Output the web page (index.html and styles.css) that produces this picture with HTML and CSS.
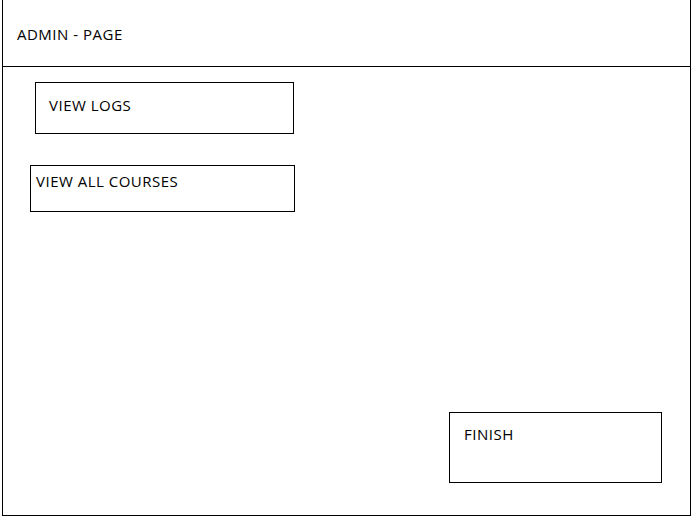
FILE: index.html
```html
<!DOCTYPE html>
<html>
<head>
<meta charset="utf-8">
<link rel="stylesheet" href="styles.css">
</head>
<body>
<div class="frame">
  <div class="header"><span class="title">ADMIN - PAGE</span></div>
  <div class="content">
    <div class="btn btn-logs">VIEW LOGS</div>
    <div class="btn btn-courses">VIEW ALL COURSES</div>
    <div class="btn btn-finish">FINISH</div>
  </div>
</div>
</body>
</html>
```
FILE: styles.css
```css
html, body {
  margin: 0;
  padding: 0;
  background: #fff;
}
body {
  font-family: "Open Sans", "Noto Sans", sans-serif;
  font-size: 15px;
  letter-spacing: 0.5px;
  color: #000;
}
.frame {
  box-sizing: border-box;
  margin-left: 2px;
  width: 689px;
  height: 516px;
  border-left: 1px solid #000;
  border-right: 1px solid #000;
  border-bottom: 1px solid #000;
}
.header {
  box-sizing: border-box;
  height: 67px;
  border-bottom: 1px solid #000;
  padding: 24px 0 0 14px;
  line-height: 20px;
}
.content {
  display: flex;
  flex-direction: column;
  align-items: flex-start;
}
.btn {
  box-sizing: border-box;
  border: 1px solid #000;
  line-height: 20px;
}
.btn-logs {
  margin: 15px 0 0 32px;
  width: 259px;
  height: 52px;
  padding: 12px 0 0 13px;
}
.btn-courses {
  margin: 31px 0 0 27px;
  width: 265px;
  height: 47px;
  padding: 5px 0 0 5px;
}
.btn-finish {
  margin: 200px 0 0 446px;
  width: 213px;
  height: 71px;
  padding: 11px 0 0 14px;
}
```
